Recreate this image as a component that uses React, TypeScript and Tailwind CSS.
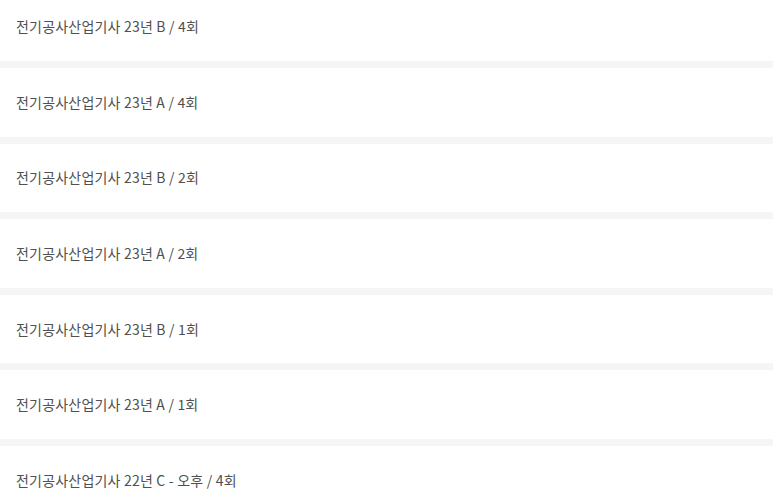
const items = [
  '전기공사산업기사 23년 B / 4회',
  '전기공사산업기사 23년 A / 4회',
  '전기공사산업기사 23년 B / 2회',
  '전기공사산업기사 23년 A / 2회',
  '전기공사산업기사 23년 B / 1회',
  '전기공사산업기사 23년 A / 1회',
  '전기공사산업기사 22년 C - 오후 / 4회',
];

export default function App() {
  return (
    <div className="h-[502px] w-full overflow-hidden bg-[#f5f5f5] font-['Noto_Sans_CJK_KR','Noto_Sans',sans-serif]">
      <ul className="flex flex-col gap-[7px] -mt-[7.5px]">
        {items.map((title, i) => (
          <li key={i} className="flex h-[68.6px] items-center bg-white px-4 text-[14px] tracking-[0.2px] text-[#505050]">
            {title}
          </li>
        ))}
      </ul>
    </div>
  );
}
